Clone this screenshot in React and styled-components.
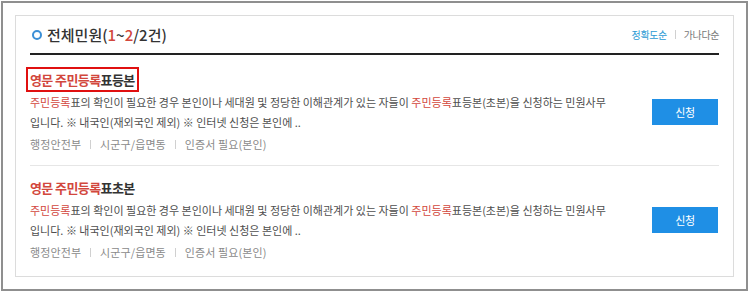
import React from "react";
import styled, { createGlobalStyle } from "styled-components";

const GlobalStyle = createGlobalStyle`
  html, body {
    margin: 0;
    padding: 0;
    background: #fff;
  }
  body {
    font-family: "Noto Sans CJK KR", "Noto Sans", sans-serif;
  }
`;

const Frame = styled.div`
  box-sizing: border-box;
  width: 747px;
  height: 290px;
  margin: 1px;
  border: 2px solid #8f8f8f;
  padding: 12px;
`;

const Panel = styled.section`
  box-sizing: border-box;
  height: 262px;
  border: 1px solid #dcdcdc;
  padding: 0 14px;
`;

const Header = styled.header`
  display: flex;
  align-items: center;
  justify-content: space-between;
  height: 37px;
  border-bottom: 2px solid #222;
`;

const Heading = styled.h2`
  display: flex;
  align-items: center;
  gap: 5px;
  margin: 0;
  font-size: 15px;
  font-weight: 500;
  letter-spacing: 0;
  color: #333;
`;

const Ring = styled.span`
  display: inline-block;
  box-sizing: border-box;
  width: 10px;
  height: 10px;
  border-radius: 50%;
  border: 2.5px solid #3b8fd6;
  margin-left: 2px;
`;

const Num = styled.span`
  color: #d2473d;
`;

const Sort = styled.nav`
  display: flex;
  align-items: center;
  gap: 8px;
  font-size: 10px;
  letter-spacing: -0.4px;
`;

const SortLink = styled.a`
  color: ${(p) => (p.$active ? "#2b9ad4" : "#777")};
  text-decoration: none;
`;

const Bar = styled.span`
  width: 1px;
  height: 9px;
  background: #d0d0d0;
`;

const List = styled.ul`
  list-style: none;
  margin: 0;
  padding: 0;
`;

const Item = styled.li`
  display: flex;
  align-items: center;
  justify-content: space-between;
  padding: 11px 0 11px;
  &:first-child {
    padding-top: 14px;
    border-bottom: 1px solid #e6e6e6;
  }
`;

const Body = styled.div`
  display: flex;
  flex-direction: column;
`;

const Title = styled.h3`
  align-self: flex-start;
  margin: 0 0 2px -2px;
  padding: 0 2px;
  font-size: 13px;
  line-height: 21px;
  font-weight: 700;
  letter-spacing: -0.6px;
  color: #333;
  outline: ${(p) => (p.$marked ? "2px solid #e01010" : "none")};
`;

const Hit = styled.span`
  color: #d2473d;
`;

const Desc = styled.p`
  margin: 0;
  font-size: 11px;
  line-height: 20px;
  letter-spacing: 0;
  color: #4e4e4e;
  white-space: nowrap;
`;

const Line = styled.span`
  display: block;
`;

const Meta = styled.div`
  display: flex;
  align-items: center;
  gap: 9px;
  margin-top: 2px;
  height: 20px;
  font-size: 11px;
  letter-spacing: 0.1px;
  color: #8a8a8a;
`;

const ApplyButton = styled.button`
  width: 66px;
  height: 26px;
  margin-right: 1px;
  border: 0;
  background: #1f8fe5;
  color: #fff;
  font-family: inherit;
  font-size: 11px;
  letter-spacing: -0.3px;
  cursor: pointer;
`;

const items = [
  { id: 1, rest: "표등본", marked: true },
  { id: 2, rest: "표초본", marked: false },
];

const metaParts = ["행정안전부", "시군구/읍면동", "인증서 필요(본인)"];

export default function App() {
  return (
    <>
      <GlobalStyle />
      <Frame>
        <Panel>
          <Header>
            <Heading>
              <Ring />
              <span>
                전체민원(<Num>1</Num>~<Num>2</Num>/2건)
              </span>
            </Heading>
            <Sort>
              <SortLink $active href="#">
                정확도순
              </SortLink>
              <Bar />
              <SortLink href="#">가나다순</SortLink>
            </Sort>
          </Header>
          <List>
            {items.map((it) => (
              <Item key={it.id}>
                <Body>
                  <Title $marked={it.marked}>
                    <Hit>영문 주민등록</Hit>
                    {it.rest}
                  </Title>
                  <Desc>
                    <Line>
                      <Hit>주민등록</Hit>표의 확인이 필요한 경우 본인이나 세대원 및 정당한
                      이해관계가 있는 자들이 <Hit>주민등록</Hit>표등본(초본)을 신청하는
                      민원사무
                    </Line>
                    <Line>입니다. ※ 내국인(재외국인 제외) ※ 인터넷 신청은 본인에 ..</Line>
                  </Desc>
                  <Meta>
                    {metaParts.map((m, i) => (
                      <React.Fragment key={m}>
                        {i > 0 && <Bar />}
                        <span>{m}</span>
                      </React.Fragment>
                    ))}
                  </Meta>
                </Body>
                <ApplyButton>신청</ApplyButton>
              </Item>
            ))}
          </List>
        </Panel>
      </Frame>
    </>
  );
}
